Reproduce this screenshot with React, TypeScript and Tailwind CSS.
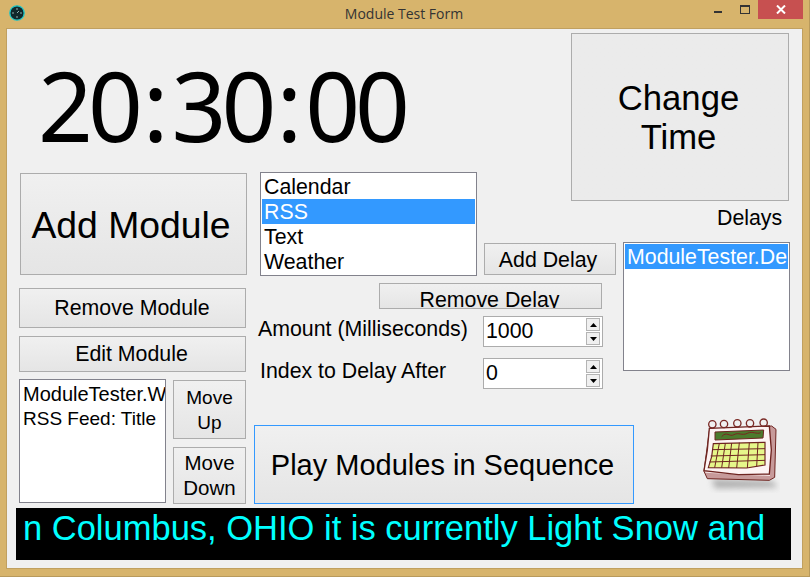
import React from 'react';

const btnBase = 'flex items-center justify-center text-center border bg-gradient-to-b text-black';
const btn = `${btnBase} border-[#acacac] from-[#f0f0f0] to-[#e5e5e5] leading-none`;
const moveBtn = `${btnBase} border-[#acacac] from-[#f0f0f0] to-[#e5e5e5] w-[73px] leading-[25px] block`;
const list = 'bg-white border border-[#82828c] text-black overflow-hidden whitespace-nowrap';
const row = 'h-[25px] leading-[27px] pl-[2px]';

const Spinner = ({ value }: { value: string }) => (
  <div className="w-[120px] h-[31px] bg-white border border-[#acacac] flex items-center justify-between pl-[2px] pr-[2px]">
    <span className="text-[21.33px] leading-none">{value}</span>
    <div className="flex flex-col w-[14px] h-[27px] gap-[1px]">
      <div className="flex-1 flex items-center justify-center border border-[#b4b4b4] bg-[#f0f0f0]">
        <svg width="7" height="4" viewBox="0 0 7 4"><path d="M3.5 0L7 4H0z" fill="#000" /></svg>
      </div>
      <div className="flex-1 flex items-center justify-center border border-[#b4b4b4] bg-[#f0f0f0]">
        <svg width="7" height="4" viewBox="0 0 7 4"><path d="M0 0h7L3.5 4z" fill="#000" /></svg>
      </div>
    </div>
  </div>
);

// traced over the reference at 3x, so the viewBox is 3 times the drawn size
const CalendarIcon = () => (
  <svg width="110" height="100" viewBox="0 0 330 300" className="ml-[47px] mt-[29px]">
    <defs>
      <filter id="cal-shadow" x="-20%" y="-50%" width="140%" height="200%">
        <feGaussianBlur stdDeviation="9" />
      </filter>
    </defs>
    <path d="M125 238L305 242L325 262L135 265z" fill="#777" opacity="0.55" filter="url(#cal-shadow)" />
    <path d="M118 92L305 78L318 88L314 232L298 241L112 236L102 214z" fill="#c79a9a" stroke="#6e2420" strokeWidth="3" />
    <path d="M106 216L300 226" stroke="#f6e6e6" strokeWidth="4" />
    <path d="M118 85L298 78L304 150L298 222L205 224L102 212L112 150z" fill="#fdf3f3" stroke="#6e2420" strokeWidth="4" />
    <path d="M135 96L281 90L279 114L135 120z" fill="#4c7a2c" stroke="#6e2420" strokeWidth="3" />
    <path d="M155 110C170 92 178 112 192 104S215 108 232 100S258 104 272 98" fill="none" stroke="#7b2420" strokeWidth="3" />
    <path d="M130 131L285 127L285 195L230 204L115 203L125 170z" fill="#e6f78a" stroke="#6e2420" strokeWidth="3.5" />
    <path
      d="M126 149L285 146M122 168L285 164M118 186L285 181M148 130L134 203M166 130L155 203M185 129L176 204M208 128L200 204M238 128L232 204M264 127L260 200"
      fill="none"
      stroke="#6e2420"
      strokeWidth="3"
    />
    {[
      [127, 73],
      [162, 72],
      [202, 70],
      [240, 70],
      [281, 68],
    ].map(([x, y]) => (
      <circle key={x} cx={x} cy={y} r="11" fill="none" stroke="#7a2a26" strokeWidth="4" />
    ))}
  </svg>
);

export default function App() {
  return (
    <div className="w-[810px] h-[577px] bg-[#d7b46c] border-r border-b border-[#b89a5c] flex flex-col overflow-hidden font-['Liberation_Sans',sans-serif] text-black">
      {/* Title bar */}
      <div className="h-[28px] flex items-start shrink-0">
        <div className="w-[32px] h-[26px] flex items-center justify-center pl-[1px]">
          <svg width="16" height="16" viewBox="0 0 16 16">
            <circle cx="8" cy="8" r="7.2" fill="#10282c" stroke="#1cc8c8" strokeWidth="1.3" />
            <path d="M8 3v2M8 11v2M3 8h2M11 8h2M8 8l2-2" stroke="#8fb3b3" strokeWidth="1" />
          </svg>
        </div>
        <div className="flex-1 text-center text-[14px] leading-[28px] text-[#333] font-['Open_Sans',sans-serif] pl-[62px]">
          Module Test Form
        </div>
        <div className="flex items-start mr-[6px]">
          <div className="w-[8px] h-[2px] bg-[#333] mt-[11px]" />
          <div className="w-[10px] h-[9px] mt-[5px] ml-[18px] border border-[#333] border-t-2" />
          <div className="w-[45px] h-[19px] bg-[#c75050] flex items-center justify-center ml-[8px]">
            <svg width="10" height="9" viewBox="0 0 10 9"><path d="M1 .5l8 8M9 .5l-8 8" stroke="#fff" strokeWidth="2" /></svg>
          </div>
        </div>
      </div>

      {/* Client area */}
      <div className="ml-[6px] mr-[6px] h-[541px] bg-[#f0f0f0] border border-[#c0a060] pl-[12px] pt-[4px]">
        {/* Clock row */}
        <div className="h-[139px] flex justify-between">
          <div className="pl-[19px] pt-[17px] text-[96px] leading-[110px] font-['Noto_Sans',sans-serif] whitespace-nowrap flex">
            <span className="tracking-[-5px]">20</span>
            <span className="ml-[5px] mr-[3px]">:</span>
            <span className="tracking-[-5px]">30</span>
            <span className="ml-[5px] mr-[3px]">:</span>
            <span className="tracking-[-5px]">00</span>
          </div>
          <button className={`${btnBase} border-[#acacac] from-[#ebebeb] to-[#ebebeb] w-[218px] h-[168px] mr-[13px] pr-[3px] pt-[2px] text-[34.67px] leading-[39px] block`}>
            Change
            <br />
            Time
          </button>
        </div>

        {/* Controls */}
        <div className="flex">
          <div className="w-[227px] flex flex-col pt-[1px]">
            <button className={`${btn} h-[102px] w-[227px] ml-[1px] pr-[5px] pt-[3px] text-[37.33px]`}>Add Module</button>
            <button className={`${btn} h-[40px] mt-[13px] pr-[1px] pt-[2px] text-[21.33px]`}>Remove Module</button>
            <button className={`${btn} h-[36px] mt-[8px] pr-[2px] pt-[2px] text-[21.33px]`}>Edit Module</button>
            <div className="flex mt-[7px]">
              <div className={`${list} w-[147px] h-[124px] pl-[3px] pt-[2px] leading-[25px]`}>
                <div className="text-[20px]">ModuleTester.W</div>
                <div className="text-[19px] -mt-[1px]">RSS Feed: Title</div>
              </div>
              <div className="ml-[7px] flex flex-col">
                <button className={`${moveBtn} h-[59px] mt-[1px] text-[19px]`}>
                  Move
                  <br />
                  Up
                </button>
                <button className={`${moveBtn} h-[57px] mt-[8px] pb-[2px] text-[20.5px]`}>
                  Move
                  <br />
                  Down
                </button>
              </div>
            </div>
          </div>

          <div className="w-[369px] ml-[8px] flex flex-col">
            <div className="flex items-end pl-[6px] h-[104px]">
              <div className={`${list} w-[217px] h-[104px] px-[1px] pt-[1px] text-[21.33px]`}>
                <div className={row}>Calendar</div>
                <div className={`${row} bg-[#3399ff] text-white`}>RSS</div>
                <div className={row}>Text</div>
                <div className={row}>Weather</div>
              </div>
              <button className={`${btn} w-[132px] h-[32px] ml-[7px] mb-[1px] pr-[4px] pt-[3px] text-[21.33px]`}>Add Delay</button>
            </div>
            <div className={`${btn} items-start w-[223px] h-[26px] ml-[125px] mt-[7px] pr-[2px] text-[21.33px] overflow-hidden pt-[6px]`}>
              Remove Delay
            </div>
            <div className="flex items-center h-[31px] mt-[7px] pl-[4px]">
              <span className="w-[225px] text-[21.33px] -mt-[3px]">Amount (Milliseconds)</span>
              <Spinner value="1000" />
            </div>
            <div className="flex items-center h-[31px] mt-[11px] pl-[6px]">
              <span className="w-[223px] text-[21.33px] -mt-[4px]">Index to Delay After</span>
              <Spinner value="0" />
            </div>
            <button className={`${btnBase} border-[#3399ff] from-[#f0f0f0] to-[#e5e5e5] leading-none w-[380px] h-[79px] mt-[36px] pr-[3px] pt-[2px] text-[29px]`}>
              Play Modules in Sequence
            </button>
          </div>

          <div className="w-[167px] flex flex-col">
            <div className="text-[21.33px] leading-[24px] mt-[34px] ml-[94px]">Delays</div>
            <div className={`${list} w-[167px] h-[129px] mt-[12px] px-[1px] pt-[1px] text-[21.33px]`}>
              <div className={`${row} bg-[#3399ff] text-white overflow-hidden`}>ModuleTester.Delay</div>
            </div>
            <CalendarIcon />
          </div>
        </div>

        {/* Ticker */}
        <div className="h-[52px] mt-[4px] ml-[-3px] w-[775px] bg-black text-[#00ffff] text-[34.5px] leading-[40px] pl-[7px] whitespace-nowrap overflow-hidden">
          n Columbus, OHIO it is currently Light Snow and
        </div>
      </div>
    </div>
  );
}
